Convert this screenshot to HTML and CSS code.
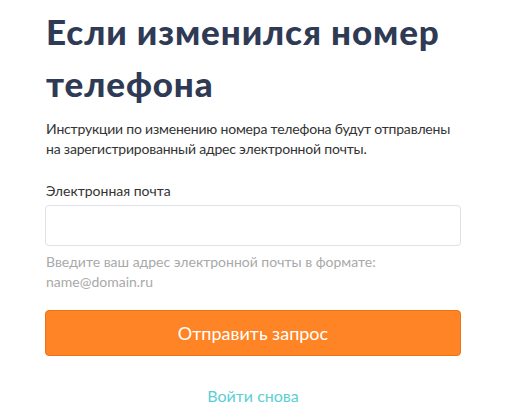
FILE: index.html
```html
<!DOCTYPE html>
<html lang="ru">
<head>
    <meta charset="UTF-8">
    <meta name="viewport" content="width=device-width, initial-scale=1.0">
    <title>Если изменился номер телефона</title>
    <link rel="stylesheet" href="styles.css">
</head>
<body>
    <div class="recover">
        <h1>Если изменился номер телефона</h1>
        <p class="lead">Инструкции по изменению номера телефона будут отправлены на зарегистрированный адрес электронной почты.</p>

        <form class="recover-form">
            <label for="email">Электронная почта</label>
            <input type="email" id="email">
            <p class="hint">Введите ваш адрес электронной почты в формате: name@domain.ru</p>
            <button type="submit">Отправить запрос</button>
        </form>

        <a class="back-link" href="#">Войти снова</a>
    </div>
</body>
</html>
```

FILE: styles.css
```css
body {
    margin: 0;
    font-family: Lato, 'Open Sans', sans-serif;
    background-color: #fff;
    color: #333;
}

.recover {
    width: 416px;
    padding: 5px 0 0 45px;
}

h1 {
    font-weight: 900;
    font-size: 35px;
    letter-spacing: 0.9px;
    line-height: 52px;
    color: #2f3a55;
    margin: 0 0 10px;
    padding-left: 1px;
}

.lead {
    font-size: 14px;
    letter-spacing: -0.2px;
    line-height: 20px;
    margin: 0 0 22px;
    padding-left: 1px;
}

.recover-form label {
    display: block;
    font-size: 14px;
    line-height: 20px;
    margin-bottom: 4px;
    padding-left: 1px;
}

.recover-form input {
    display: block;
    box-sizing: border-box;
    width: 100%;
    height: 41px;
    border: 1px solid #dfe1e8;
    border-radius: 4px;
    margin: 0;
}

.hint {
    font-size: 14px;
    line-height: 20px;
    color: #a9a9a9;
    margin: 6px 0 0;
    padding-left: 1px;
}

.recover-form button {
    display: block;
    box-sizing: border-box;
    width: 100%;
    height: 46px;
    margin-top: 18px;
    background-color: #ff8426;
    border: 1px solid #ec7217;
    border-radius: 4px;
    color: #fff;
    font-family: inherit;
    font-size: 18px;
}

.back-link {
    display: block;
    text-align: center;
    margin-top: 30px;
    font-size: 16px;
    color: #5ccfd4;
    text-decoration: none;
}
```
